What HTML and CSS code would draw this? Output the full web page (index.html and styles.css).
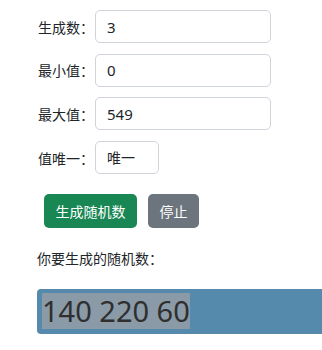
FILE: index.html
```html
<!DOCTYPE html>
<html lang="zh-CN">
<head>
    <meta charset="UTF-8">
    <meta name="viewport" content="width=device-width, initial-scale=1.0">
    <title>随机数生成器</title>
    <link rel="stylesheet" href="styles.css">
</head>
<body>
    <main class="app">
        <form class="gen-form">
            <div class="field">
                <label for="count">生成数：</label>
                <input type="text" id="count" class="field-input" value="3">
            </div>
            <div class="field">
                <label for="minValue">最小值：</label>
                <input type="text" id="minValue" class="field-input" value="0">
            </div>
            <div class="field">
                <label for="maxValue">最大值：</label>
                <input type="text" id="maxValue" class="field-input" value="549">
            </div>
            <div class="field">
                <label for="unique">值唯一：</label>
                <select id="unique" class="field-input field-select">
                    <option>唯一</option>
                    <option>可重复</option>
                </select>
            </div>
            <div class="actions">
                <button type="button" class="btn btn-green">生成随机数</button>
                <button type="button" class="btn btn-gray">停止</button>
            </div>
        </form>

        <p class="result-label">你要生成的随机数：</p>
        <div class="result-box">
            <span class="result-text">140 220 60</span>
        </div>
    </main>
</body>
</html>
```

FILE: styles.css
```css
html {
    overflow-x: hidden;
}

body {
    margin: 0;
    font-family: "Noto Sans", "Noto Sans CJK SC", sans-serif;
    font-size: 14px;
    color: #212529;
    background: #fff;
}

.app {
    padding: 10px 0 0 37px;
}

.field {
    display: flex;
    align-items: center;
    margin-bottom: 10.7px;
}

.field label {
    width: 56px;
    margin-left: 1px;
    margin-right: 1px;
    white-space: nowrap;
}

.field-input {
    box-sizing: border-box;
    width: 176px;
    height: 33px;
    padding: 0 11px;
    border: 1px solid #ced4da;
    border-radius: 5px;
    font-family: inherit;
    font-size: 15px;
    color: #212529;
    background: #fff;
}

.field-select {
    width: 64px;
    font-size: 14px;
    appearance: none;
    -webkit-appearance: none;
}

.actions {
    display: flex;
    gap: 11px;
    margin: 20px 0 0 7px;
}

.btn {
    height: 34px;
    padding: 0 11.5px;
    border: none;
    border-radius: 5px;
    font-family: inherit;
    font-size: 14px;
    color: #fff;
    cursor: pointer;
}

.btn-green {
    background-color: #198754;
}

.btn-gray {
    background-color: #6c757d;
}

.result-label {
    margin: 20px 0 0;
    line-height: 21px;
}

.result-box {
    height: 45px;
    margin-top: 20px;
    padding: 4px 5px;
    box-sizing: border-box;
    border-radius: 4px 0 0 4px;
    background-color: #568aad;
}

.result-text {
    display: inline-block;
    height: 36px;
    line-height: 36px;
    font-size: 29px;
    color: #2f2f2f;
    background-color: #8a9aa7;
}
```
